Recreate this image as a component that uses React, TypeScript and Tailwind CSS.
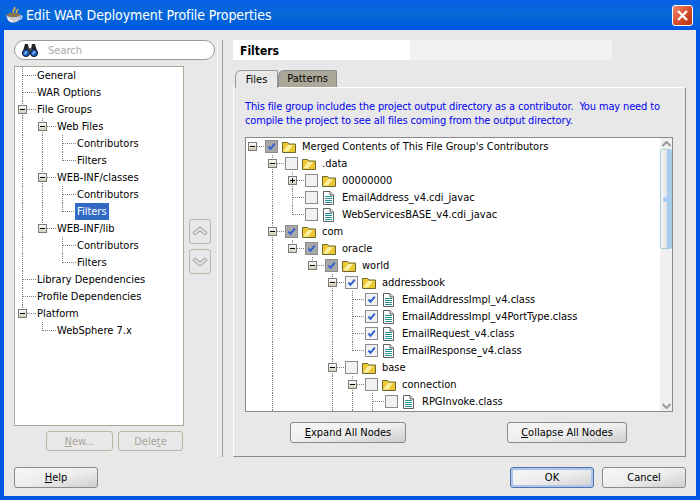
const font = "font-['DejaVu_Sans',sans-serif] [font-stretch:condensed]";

type TreeNode = {
  label: string;
  guides?: boolean[];
  last?: boolean;
  toggle?: "minus" | "plus";
  noLine?: boolean;
  selected?: boolean;
};

const g = (...bits: number[]) => bits.map((b) => b === 1);

const navRows: TreeNode[] = [
  { label: "General" },
  { label: "WAR Options" },
  { label: "File Groups", toggle: "minus" },
  { label: "Web Files", guides: g(1), toggle: "minus" },
  { label: "Contributors", guides: g(1, 1) },
  { label: "Filters", guides: g(1, 1), last: true },
  { label: "WEB-INF/classes", guides: g(1), toggle: "minus" },
  { label: "Contributors", guides: g(1, 1) },
  { label: "Filters", guides: g(1, 1), last: true, selected: true },
  { label: "WEB-INF/lib", guides: g(1), toggle: "minus", last: true },
  { label: "Contributors", guides: g(1, 0) },
  { label: "Filters", guides: g(1, 0), last: true },
  { label: "Library Dependencies" },
  { label: "Profile Dependencies" },
  { label: "Platform", toggle: "minus", last: true },
  { label: "WebSphere 7.x", guides: g(0), last: true },
];

type FileRow = TreeNode & { check: "none" | "on" | "mixed" | "clipped"; kind: "folder" | "file" };

const fileRows: FileRow[] = [
  { label: "Merged Contents of This File Group's Contributors", noLine: true, toggle: "minus", check: "mixed", kind: "folder" },
  { label: ".data", guides: g(0), toggle: "minus", check: "none", kind: "folder" },
  { label: "00000000", guides: g(0, 1), toggle: "plus", check: "none", kind: "folder" },
  { label: "EmailAddress_v4.cdi_javac", guides: g(0, 1), check: "none", kind: "file" },
  { label: "WebServicesBASE_v4.cdi_javac", guides: g(0, 1), last: true, check: "none", kind: "file" },
  { label: "com", guides: g(0), toggle: "minus", check: "mixed", kind: "folder" },
  { label: "oracle", guides: g(0, 1), last: true, toggle: "minus", check: "mixed", kind: "folder" },
  { label: "world", guides: g(0, 1, 0), last: true, toggle: "minus", check: "mixed", kind: "folder" },
  { label: "addressbook", guides: g(0, 1, 0, 0), toggle: "minus", check: "on", kind: "folder" },
  { label: "EmailAddressImpl_v4.class", guides: g(0, 1, 0, 0, 1), check: "on", kind: "file" },
  { label: "EmailAddressImpl_v4PortType.class", guides: g(0, 1, 0, 0, 1), check: "on", kind: "file" },
  { label: "EmailRequest_v4.class", guides: g(0, 1, 0, 0, 1), check: "on", kind: "file" },
  { label: "EmailResponse_v4.class", guides: g(0, 1, 0, 0, 1), last: true, check: "on", kind: "file" },
  { label: "base", guides: g(0, 1, 0, 0), toggle: "minus", check: "none", kind: "folder" },
  { label: "connection", guides: g(0, 1, 0, 0, 1), toggle: "minus", check: "none", kind: "folder" },
  { label: "RPGInvoke.class", guides: g(0, 1, 0, 0, 1, 1), check: "none", kind: "file" },
  { label: "", guides: g(0, 1, 0, 0, 1, 1), check: "clipped", kind: "file" },
];

const Guide = ({ on }: { on: boolean }) => (
  <svg width="20" height="17" className="shrink-0">
    {on && <line x1="0.5" y1="0" x2="0.5" y2="17" stroke="#808080" strokeDasharray="1 1" />}
  </svg>
);

const Elbow = ({ width, node }: { width: number; node: TreeNode }) => (
  <svg width={width} height="17" className="shrink-0 overflow-visible relative z-10">
    <defs>
      <linearGradient id="toggleFill" x1="0" y1="0" x2="0" y2="1">
        <stop offset="0" stopColor="#ffffff" />
        <stop offset="1" stopColor="#cfcbb4" />
      </linearGradient>
    </defs>
    {!node.noLine && (
      <line x1="0.5" y1="0" x2="0.5" y2={node.last ? 9 : 17} stroke="#808080" strokeDasharray="1 1" />
    )}
    <line x1="1" y1="8.5" x2={width - 1} y2="8.5" stroke="#808080" strokeDasharray="1 1" />
    {node.toggle && (
      <g>
        <rect x="-3.5" y="4.5" width="8" height="8" fill="url(#toggleFill)" stroke="#7a7a7a" />
        <line x1="-2" y1="8.5" x2="3" y2="8.5" stroke="#000" />
        {node.toggle === "plus" && <line x1="0.5" y1="6" x2="0.5" y2="11" stroke="#000" />}
      </g>
    )}
  </svg>
);

const CheckBox = ({ state }: { state: FileRow["check"] }) => {
  if (state === "clipped") return <div className="w-[13px] shrink-0" />;
  return (
    <svg width="13" height="13" className="shrink-0">
      <rect x="0.5" y="0.5" width="12" height="12" fill={state === "mixed" ? "#a8a8a8" : "#f2f2f2"} stroke="#8c8c8c" />
      {state !== "none" && (
        <path d="M3.5 6.5 L5.5 8.8 L9.8 3.6" fill="none" stroke="#2f5fd0" strokeWidth="2" />
      )}
    </svg>
  );
};

const FolderIcon = () => (
  <svg width="14" height="12" className="shrink-0">
    <path d="M0.5 11.5 V1.5 H5.5 L7 3 H13.5 V11.5 Z" fill="#eec832" stroke="#6e6630" />
    <path d="M1 10.5 L6 4 H11 L6 10.5 Z" fill="#fbf0a0" />
  </svg>
);

const FileIcon = () => (
  <svg width="11" height="14" className="shrink-0 ml-[1px] mr-[2px]">
    <path d="M0.5 0.5 H7 L10.5 4 V13.5 H0.5 Z" fill="#fff" stroke="#5e5e5e" />
    <path d="M7 0.5 V4 H10.5" fill="#e4e4e4" stroke="#5e5e5e" />
    <path d="M2 5.5 H9 M2 7.5 H9 M2 9.5 H9 M2 11.5 H9" stroke="#1f8f8f" />
  </svg>
);

const Binoculars = () => (
  <svg width="16" height="14" viewBox="0 0 16 14">
    <path d="M3 1 H6 L7 6 H9 L10 1 H13 L15 8 H1 Z" fill="#23262c" />
    <rect x="6" y="5" width="4" height="4" fill="#55585e" />
    <circle cx="4" cy="10" r="3.6" fill="#1b62c8" stroke="#15171c" />
    <circle cx="12" cy="10" r="3.6" fill="#1b62c8" stroke="#15171c" />
    <path d="M2.5 11 L5 8.5 M10.5 11 L13 8.5" stroke="#a9d2f7" strokeWidth="1.2" />
  </svg>
);

const CoffeeCup = () => (
  <svg width="17" height="18" viewBox="0 0 17 18">
    <path d="M8 1 C11 3 5 4 8 6.5 M11.5 3 C12.5 4.5 9.5 5 10.5 7" fill="none" stroke="#f3b544" strokeWidth="1.5" />
    <path d="M14 10 C17 9 16.5 13 13 13.5" fill="none" stroke="#d5d9de" strokeWidth="1.3" />
    <ellipse cx="7.5" cy="9" rx="7" ry="2.2" fill="#8a7448" />
    <path d="M0.5 9 C0.5 14 3.5 16.5 7.5 16.5 C11.5 16.5 14.5 14 14.5 9 C12.5 12 2.5 12 0.5 9 Z" fill="#c9cdd2" />
    <path d="M2 11.5 C3 14.5 5 15.5 7 15.5" fill="none" stroke="#f2f4f6" strokeWidth="1.5" />
  </svg>
);

const CloseButton = () => (
  <div className="w-[21px] h-[21px] rounded-[3px] border border-white bg-linear-to-br from-[#e88a70] via-[#d8502c] to-[#b8300c] flex items-center justify-center">
    <svg width="13" height="13">
      <path d="M2 2 L11 11 M11 2 L2 11" stroke="#fff" strokeWidth="2.4" />
    </svg>
  </div>
);

const Chevrons = ({ up }: { up?: boolean }) => (
  <svg width="16" height="11" viewBox="0 0 16 11" className={up ? "" : "rotate-180"}>
    <path d="M1 6.5 L8 1 L15 6.5 L13 9 L8 5 L3 9 Z" fill="#e2e2e2" stroke="#989898" />
  </svg>
);

const ArrowBtn = ({ up }: { up?: boolean }) => (
  <div className="w-[22px] h-[25px] rounded-[3px] border border-[#b9b7a3] flex items-center justify-center">
    <Chevrons up={up} />
  </div>
);

const PushBtn = ({ className, children }: { className: string; children: React.ReactNode }) => (
  <button className={`h-[21px] rounded-[3px] border border-[#8a8a8a] bg-linear-to-br from-[#f6f6f6] via-[#eeeeee] to-[#cfcfcf] text-[11px] text-black leading-none ${className}`}>
    {children}
  </button>
);

const DisabledBtn = ({ className, children }: { className: string; children: React.ReactNode }) => (
  <button className={`h-[20px] rounded-[3px] border border-[#b9b7a3] text-[11px] text-[#a8a59a] leading-none ${className}`}>
    {children}
  </button>
);

const ScrollBar = () => (
  <div className="w-[12px] h-full flex flex-col bg-[#f0f0f0] shrink-0">
    <div className="h-[11px] flex items-center justify-center">
      <svg width="9" height="6"><path d="M0.5 5 L4.5 1 L8.5 5" fill="none" stroke="#9a9a9a" strokeWidth="2" /></svg>
    </div>
    <div className="relative h-[100px] rounded-[2px] border border-[#9fd0d8] flex overflow-hidden">
      <div className="flex-1 bg-linear-to-r from-[#f6f6f6] to-[#e2e2e2]" />
      <div className="w-[4px] bg-[#a8ccf0]" />
      <div className="absolute left-[2px] top-[47px] w-[6px] h-[5px] rounded-full bg-[#a9cdf5]" />
    </div>
    <div className="flex-1" />
    <div className="h-[11px] flex items-center justify-center">
      <svg width="9" height="6"><path d="M0.5 1 L4.5 5 L8.5 1" fill="none" stroke="#9a9a9a" strokeWidth="2" /></svg>
    </div>
  </div>
);

export default function App() {
  return (
    <div className={`w-[700px] h-[500px] flex flex-col overflow-hidden bg-[#e8e8e8] text-black ${font}`}>
      {/* Title bar */}
      <div className="h-[30px] shrink-0 flex items-center pl-[6px] pr-[7px] bg-linear-to-b from-[#0a5fe6] via-[#0668d8] to-[#0055e5]">
        <CoffeeCup />
        <span className="ml-[3px] text-[14px] tracking-[-0.1px] font-medium text-white leading-none">
          Edit WAR Deployment Profile Properties
        </span>
        <div className="ml-auto">
          <CloseButton />
        </div>
      </div>

      <div className="flex-1 min-h-0 flex flex-col border-x-4 border-b-4 border-[#0055e5] px-[10px] pt-[10px] pb-[8px]">
        <div className="flex h-[417px]">
          {/* Left navigator */}
          <div className="w-[201px] shrink-0 flex flex-col">
            <div className="h-[20px] rounded-full border border-[#9a9a9a] bg-white flex items-center pl-[7px] gap-[10px]">
              <Binoculars />
              <span className="text-[11px] text-[#a9a9a9] leading-none">Search</span>
            </div>
            <div className="flex mt-[6px] h-[360px]">
              <div className="w-[170px] shrink-0 border border-[#aca899] bg-white">
                {navRows.map((r, i) => (
                  <div key={i} className="h-[17px] flex pl-[7px]">
                    {(r.guides ?? []).map((on, j) => (
                      <Guide key={j} on={on} />
                    ))}
                    <Elbow width={15} node={r} />
                    <span className={`h-[17px] text-[11px] leading-[17px] px-[2px] -ml-[2px] whitespace-nowrap ${r.selected ? "bg-[#316ac5] text-white" : ""}`}>
                      {r.label}
                    </span>
                  </div>
                ))}
              </div>
              <div className="flex-1 flex flex-col items-center justify-center gap-[5px] pl-[1px]">
                <ArrowBtn up />
                <ArrowBtn />
              </div>
            </div>
            <div className="w-[170px] flex justify-end gap-[5px] pr-[1px] mt-[5px]">
              <DisabledBtn className="w-[67px]"><span className="underline">N</span>ew...</DisabledBtn>
              <DisabledBtn className="w-[65px]">Dele<span className="underline">t</span>e</DisabledBtn>
            </div>
          </div>

          {/* Splitter */}
          <div className="w-[18px] shrink-0 pl-[2px]">
            <div className="w-[6px] h-full border-l border-r border-l-[#f6f6f6] border-r-[#9a9a9a]" />
          </div>

          {/* Right panel */}
          <div className="flex-1 min-w-0 flex flex-col">
            <div className="h-[20px] flex items-center">
              <div className="w-[177px] h-full bg-white pl-[7px] pt-[1px] flex items-center">
                <span className="text-[12px] font-bold leading-none">Filters</span>
              </div>
              <div className="w-[202px] h-full bg-[#f1f1f1]" />
            </div>
            <div className="flex items-end mt-[9px] h-[18px] pl-[2px]">
              <div className="w-[43px] h-[18px] rounded-tl-[6px] rounded-tr-[2px] border border-b-0 border-[#9a9a9a] bg-[#e8e8e8] text-[11px] leading-[17px] text-center relative z-10 -mb-[1px]">Files</div>
              <div className="w-[59px] h-[17px] rounded-tl-[6px] rounded-tr-[2px] border border-b-0 border-[#8a8a8a] bg-[#aca899] text-[11px] leading-[16px] text-center">Patterns</div>
            </div>
            <div className="flex-1 border border-l-white border-t-white border-r-[#8a8a8a] border-b-[#8a8a8a] flex flex-col pl-[11px] pr-[12px]">
              <p className="mt-[12px] text-[11px] tracking-[-0.14px] leading-[14px] text-[#0000f0] whitespace-pre">
                {"This file group includes the project output directory as a contributor.  You may need to\ncompile the project to see all files coming from the output directory."}
              </p>
              <div className="mt-[9px] h-[275px] border border-[#8a8a8a] bg-white flex overflow-hidden">
                <div className="flex-1 min-w-0 pl-[6px] overflow-hidden">
                  {fileRows.map((r, i) => (
                    <div key={i} className="h-[17px] flex items-center">
                      {(r.guides ?? []).map((on, j) => (
                        <Guide key={j} on={on} />
                      ))}
                      <Elbow width={13} node={r} />
                      <CheckBox state={r.check} />
                      <div className="w-[19px] shrink-0 flex justify-end pr-[1px]">
                        {r.kind === "folder" ? <FolderIcon /> : <FileIcon />}
                      </div>
                      <span className="ml-[5px] text-[11px] leading-[17px] whitespace-nowrap">{r.label}</span>
                    </div>
                  ))}
                </div>
                <ScrollBar />
              </div>
              <div className="flex mt-[10px] pl-[45px]">
                <PushBtn className="w-[116px]"><span className="underline">E</span>xpand All Nodes</PushBtn>
                <PushBtn className="w-[120px] ml-[101px]"><span className="underline">C</span>ollapse All Nodes</PushBtn>
              </div>
            </div>
          </div>
        </div>

        {/* Footer */}
        <div className="flex mt-[10px]">
          <PushBtn className="w-[84px]"><span className="underline">H</span>elp</PushBtn>
          <div className="ml-auto flex gap-[8px]">
            <PushBtn className="w-[84px] !border-[#5a6fb0] shadow-[inset_0_0_0_2px_#a9c6ec]">OK</PushBtn>
            <PushBtn className="w-[84px]">Cancel</PushBtn>
          </div>
        </div>
      </div>
    </div>
  );
}
